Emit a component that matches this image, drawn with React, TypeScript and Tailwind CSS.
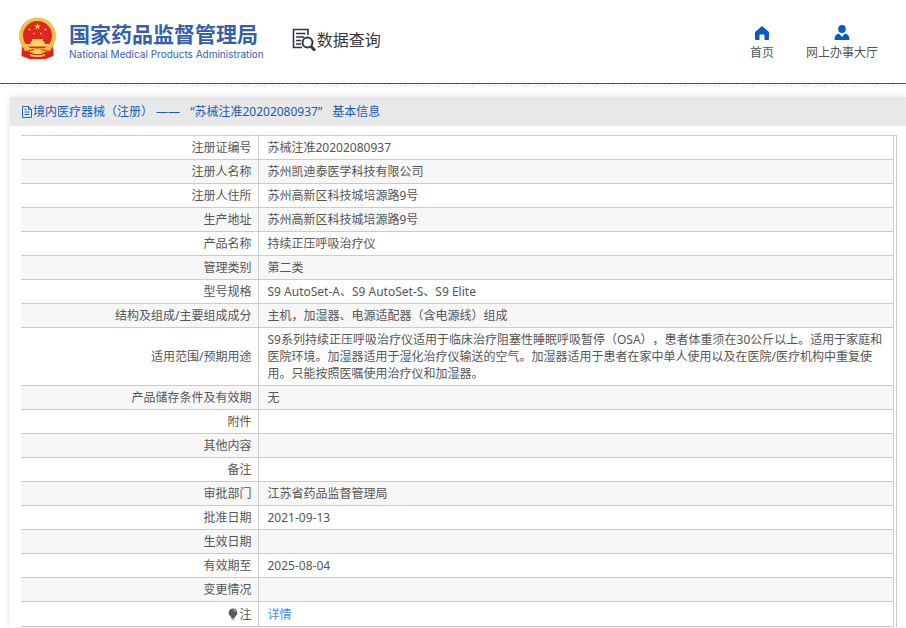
import type { ReactNode } from 'react';

interface Row {
  label: string;
  value?: ReactNode;
}

const rows: Row[] = [
  { label: '注册证编号', value: '苏械注准20202080937' },
  { label: '注册人名称', value: '苏州凯迪泰医学科技有限公司' },
  { label: '注册人住所', value: '苏州高新区科技城培源路9号' },
  { label: '生产地址', value: '苏州高新区科技城培源路9号' },
  { label: '产品名称', value: '持续正压呼吸治疗仪' },
  { label: '管理类别', value: '第二类' },
  { label: '型号规格', value: 'S9 AutoSet-A、S9 AutoSet-S、S9 Elite' },
  { label: '结构及组成/主要组成成分', value: '主机，加湿器、电源适配器（含电源线）组成' },
  {
    label: '适用范围/预期用途',
    value:
      'S9系列持续正压呼吸治疗仪适用于临床治疗阻塞性睡眠呼吸暂停（OSA），患者体重须在30公斤以上。适用于家庭和医院环境。加湿器适用于湿化治疗仪输送的空气。加湿器适用于患者在家中单人使用以及在医院/医疗机构中重复使用。只能按照医嘱使用治疗仪和加湿器。',
  },
  { label: '产品储存条件及有效期', value: '无' },
  { label: '附件' },
  { label: '其他内容' },
  { label: '备注' },
  { label: '审批部门', value: '江苏省药品监督管理局' },
  { label: '批准日期', value: '2021-09-13' },
  { label: '生效日期' },
  { label: '有效期至', value: '2025-08-04' },
  { label: '变更情况' },
];

const STAR = 'M0-1 .225-.309 .951-.309 .363.118 .588.809 0 .382-.588.809-.363.118-.951-.309-.225-.309Z';

function Emblem() {
  return (
    <svg viewBox="0 0 39 43" className="h-[43px] w-[39px] shrink-0" aria-hidden="true">
      <path d="M4 26 3.500 39l4 1.500 4 1.500h16l4-1.500 4-1.500L35 26z" fill="#d8251f" />
      <path d="M19.500.5C30 .5 38 8.500 38 19c0 6-2.500 11-6.500 14h-24C3.500 30 1 25 1 19 1 8.500 9 .5 19.500.5z" fill="#efc04a" />
      <circle cx="19.500" cy="18.500" r="14.500" fill="#dd261f" />
      <g fill="#fbd75a">
        <path d={STAR} transform="translate(19.500 9.500) scale(3.600)" />
        <path d={STAR} transform="translate(11.500 12.500) scale(1.600)" />
        <path d={STAR} transform="translate(27.500 12.500) scale(1.600)" />
        <path d={STAR} transform="translate(16 16.500) scale(1.500)" />
        <path d={STAR} transform="translate(23 16.500) scale(1.500)" />
        <path d="M14 22h11v2.500h1.500V27H31v2.500H8V27h4.500v-2.500H14z" />
      </g>
      <path d="M4 28c5 3.500 10 3 15.500 3.500C25 31 30 31.500 35 28l-3 6-5 1-4 2h-7l-4-2-5-1z" fill="#eebd45" />
      <path d="M8 34c4 .5 5-2 8-1M31 34c-4 .5-5-2-8-1" fill="none" stroke="#d8251f" />
      <path d="M15.500 34.500c2-2 6-2 8 0l-2 2.500h-4z" fill="#f9d963" />
      <path d="m12 37 4.500 1h6l4.500-1v2l-5 1h-5l-5-1z" fill="#f2c74d" />
    </svg>
  );
}

function SearchDocIcon() {
  return (
    <svg viewBox="0 0 25 25" className="h-[25px] w-[25px] shrink-0" fill="none" stroke="#333840" aria-hidden="true">
      <path d="M16 8V2.500H1.500v18H10" strokeWidth="1.600" />
      <path d="M4 6.500h9.500M4 10h8M4 13.500h5M4 17h5" strokeWidth="1.400" />
      <circle cx="15.500" cy="15.500" r="5" strokeWidth="2" />
      <path d="m19 19.500 4 4" strokeWidth="3" />
    </svg>
  );
}

function HomeIcon() {
  return (
    <svg viewBox="0 0 14 14" className="h-[14px] w-[14px]" fill="#0b5bbd" aria-hidden="true">
      <path d="M7 0 14 6v7a1 1 0 0 1-1 1H9.500V9.500a1 1 0 0 0-1-1h-3a1 1 0 0 0-1 1V14H1a1 1 0 0 1-1-1V6z" />
    </svg>
  );
}

function UserIcon() {
  return (
    <svg viewBox="0 0 16 15" className="h-[15px] w-[16px]" fill="#0b5bbd" aria-hidden="true">
      <ellipse cx="8" cy="4" rx="3.800" ry="4" />
      <path d="M.5 15c0-4 1.500-6 4.500-6.500L8 12l3-3.500c3 .5 4.500 2.500 4.500 6.500z" />
    </svg>
  );
}

function FileIcon() {
  return (
    <svg viewBox="0 0 12 12" className="h-[12px] w-[12px] shrink-0" fill="none" stroke="#2a68bd" aria-hidden="true">
      <path d="M1.500.5h6l3 3v8h-9zM7.500.5v3h3M3.500 3.500h2M3.500 6h5M3.500 8.500h5" />
    </svg>
  );
}

function BulbIcon() {
  return (
    <svg viewBox="0 0 10 12" className="h-[12px] w-[10px]" aria-hidden="true">
      <path d="M5 .5a4.300 4.300 0 0 0-2.500 7.800L3.500 10h3l1-1.700A4.300 4.300 0 0 0 5 .5z" fill="#555a62" />
      <path d="M3.500 11h3" stroke="#555a62" />
      <path d="M5.500 2c1.200.2 1.800.9 2 2" stroke="#fff" strokeWidth=".8" fill="none" />
    </svg>
  );
}

function Header() {
  return (
    <header className="flex h-[84px] items-start justify-between border-b border-b-[#1b5f9f] pr-7 pl-[18px]">
      <div className="flex items-start pt-[17px]">
        <a href="#" className="flex gap-3 text-[#345fa9]">
          <Emblem />
          <span className="flex flex-col pt-1">
            <span className="text-[21px] leading-[26px] font-bold">国家药品监督管理局</span>
            <span className="font-[Inter] text-[10px] leading-[14px]">National Medical Products Administration</span>
          </span>
        </a>
        <h1 className="ml-7 flex items-center pt-[10px] text-[16px] leading-[22px] text-[#333840]">
          <SearchDocIcon />
          数据查询
        </h1>
      </div>
      <nav className="flex gap-8 pt-[25px] leading-[17px] text-[#555]">
        <a href="#" className="flex flex-col items-center gap-1">
          <span className="flex h-[15px] items-end">
            <HomeIcon />
          </span>
          首页
        </a>
        <a href="#" className="flex flex-col items-center gap-1">
          <UserIcon />
          网上办事大厅
        </a>
      </nav>
    </header>
  );
}

function InfoRow({ label, value }: { label: ReactNode; value?: ReactNode }) {
  return (
    <tr className="border-b border-[#cacbce] even:bg-[#f7f7f7]">
      <th scope="row" className="w-[237px] border-r border-[#cacbce] py-[3px] pr-[6px] text-right font-normal">
        {label}
      </th>
      <td className="h-[23px] border-r border-[#cacbce] py-[3px] pr-[6px] pl-[9px]">{value}</td>
    </tr>
  );
}

export default function App() {
  return (
    <div className="min-h-screen overflow-hidden bg-white font-['Noto_Sans','Noto_Sans_CJK_SC',sans-serif] text-[12px] leading-[17px] text-[#555] [text-spacing-trim:space-all]">
      <Header />
      <div className="h-[3px] bg-[repeating-linear-gradient(135deg,#ffffff_0px,#ffffff_2px,#e6eaf0_2px,#e6eaf0_3px)]" />
      <main className="mt-[10px] ml-[10px] bg-white shadow-[0_0_8px_rgba(0,0,0,0.12)]">
        <h2 className="flex h-[29px] items-center bg-[#e8e8e8] pl-[11px] text-[#1a5ab4]">
          <FileIcon />
          <span className="flex gap-[10px]">
            <span>境内医疗器械（注册） ——</span>
            <span>“苏械注准20202080937”</span>
            <span>基本信息</span>
          </span>
        </h2>
        <div className="mt-[9px] mr-[9px] ml-[11px] border-t border-r border-[#cacbce] pr-[2px]">
          <table className="w-full table-fixed border-collapse">
            <tbody>
              {rows.map((row) => (
                <InfoRow key={row.label} label={row.label} value={row.value} />
              ))}
              <InfoRow
                label={
                  <span className="flex items-center justify-end gap-px">
                    <BulbIcon />注
                  </span>
                }
                value={
                  <a href="#" className="block pt-px text-[#3d8fe8]">
                    详情
                  </a>
                }
              />
            </tbody>
          </table>
        </div>
      </main>
    </div>
  );
}
